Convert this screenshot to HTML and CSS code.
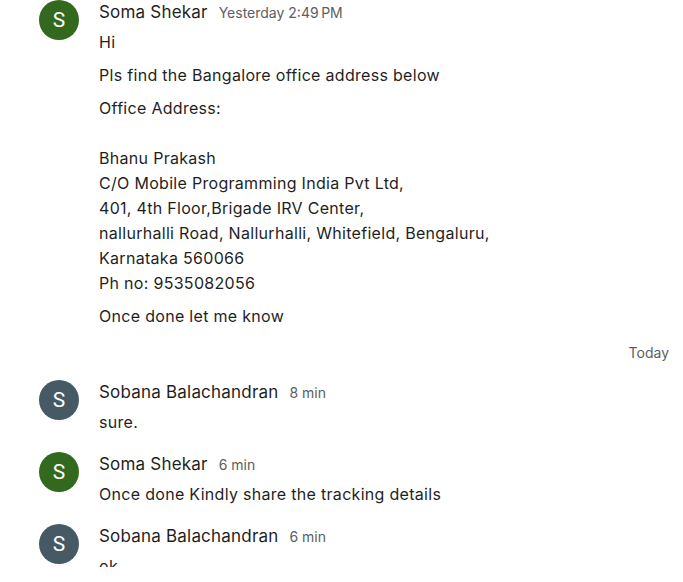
FILE: index.html
```html
<!DOCTYPE html>
<html>
<head>
<meta charset="utf-8">
<link rel="stylesheet" href="styles.css">
</head>
<body>
<div class="thread">
  <div class="group">
    <div class="avatar green">S</div>
    <div class="content">
      <div class="header"><span class="name">Soma Shekar</span><span class="time">Yesterday 2:49&#8239;PM</span></div>
      <div class="messages">
        <div class="msg">Hi</div>
        <div class="msg">Pls find the Bangalore office address below</div>
        <div class="msg">Office Address:<br><br>Bhanu Prakash<br>C/O Mobile Programming India Pvt Ltd,<br>401, 4th Floor,Brigade IRV Center,<br>nallurhalli Road, Nallurhalli, Whitefield, Bengaluru,<br>Karnataka 560066<br>Ph no: 9535082056</div>
        <div class="msg">Once done let me know</div>
      </div>
    </div>
  </div>

  <div class="divider">Today</div>

  <div class="group">
    <div class="avatar slate">S</div>
    <div class="content">
      <div class="header"><span class="name">Sobana Balachandran</span><span class="time">8 min</span></div>
      <div class="messages">
        <div class="msg">sure.</div>
      </div>
    </div>
  </div>

  <div class="group">
    <div class="avatar green">S</div>
    <div class="content">
      <div class="header"><span class="name">Soma Shekar</span><span class="time">6 min</span></div>
      <div class="messages">
        <div class="msg">Once done Kindly share the tracking details</div>
      </div>
    </div>
  </div>

  <div class="group">
    <div class="avatar slate">S</div>
    <div class="content">
      <div class="header"><span class="name">Sobana Balachandran</span><span class="time">6 min</span></div>
      <div class="messages">
        <div class="msg">ok</div>
      </div>
    </div>
  </div>
</div>
</body>
</html>
```

FILE: styles.css
```css
html, body {
  margin: 0;
  padding: 0;
  background: #ffffff;
  height: 582px;
  overflow: hidden;
}

body {
  font-family: Inter, Roboto, Arial, sans-serif;
  color: #1f1f1f;
}

.thread {
  display: flex;
  flex-direction: column;
  height: 567px;
  overflow: hidden;
  box-sizing: border-box;
  padding: 0 14px 0 39px;
}

.group {
  display: flex;
  flex-shrink: 0;
  align-items: flex-start;
  gap: 20px;
}

.group + .group {
  margin-top: 17px;
}

.divider + .group {
  margin-top: 17px;
}

.avatar {
  flex: 0 0 40px;
  width: 40px;
  height: 40px;
  border-radius: 50%;
  color: #ffffff;
  font-family: Roboto, Arial, sans-serif;
  font-size: 21px;
  line-height: 40px;
  text-align: center;
}

.green { background: #33691e; }
.slate { background: #455a64; }

.content {
  display: flex;
  flex-direction: column;
  gap: 5px;
}

.header {
  display: flex;
  align-items: baseline;
  gap: 11px;
  line-height: 24px;
}

.name {
  font-size: 17px;
  letter-spacing: 0.2px;
  color: #1f1f1f;
}

.time {
  font-size: 14px;
  color: #5e5e5e;
}

.messages {
  display: flex;
  flex-direction: column;
  gap: 8px;
}

.msg {
  font-size: 16px;
  line-height: 25px;
  letter-spacing: 0.3px;
  color: #1f1f1f;
}

.divider {
  flex-shrink: 0;
  margin-top: 14px;
  text-align: right;
  font-size: 14px;
  line-height: 20px;
  color: #5e5e5e;
}
```
